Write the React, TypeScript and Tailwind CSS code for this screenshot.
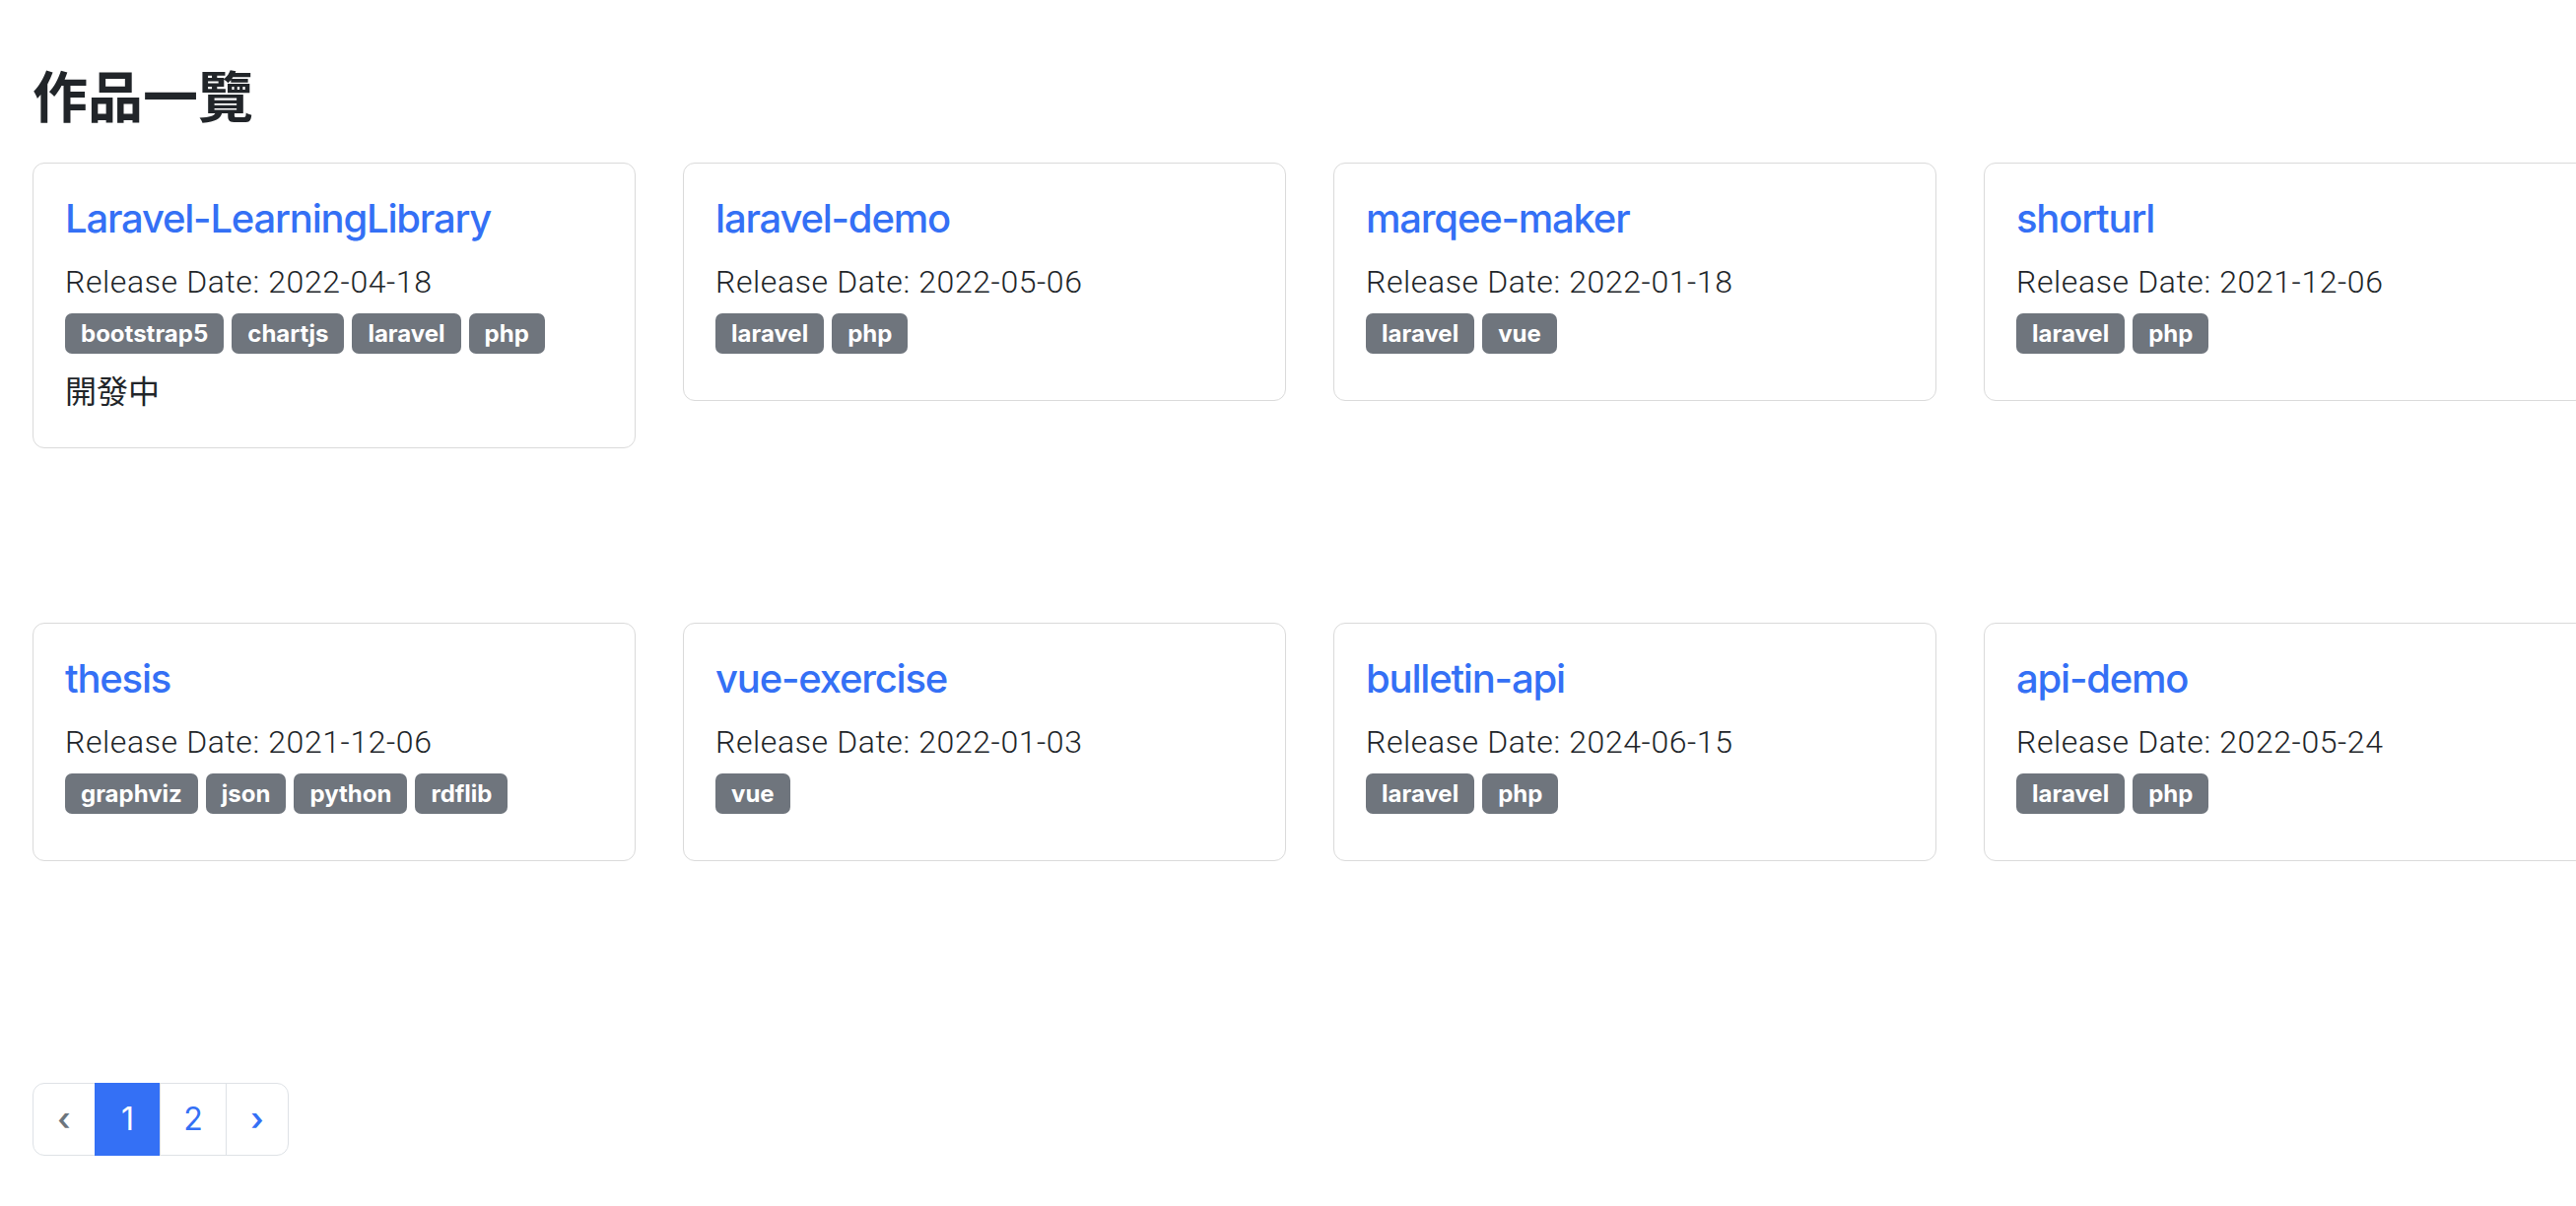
import React from "react"

type Work = {
  name: string
  date: string
  tags: string[]
  note?: string
}

const works: Work[] = [
  { name: "Laravel-LearningLibrary", date: "2022-04-18", tags: ["bootstrap5", "chartjs", "laravel", "php"], note: "開發中" },
  { name: "laravel-demo", date: "2022-05-06", tags: ["laravel", "php"] },
  { name: "marqee-maker", date: "2022-01-18", tags: ["laravel", "vue"] },
  { name: "shorturl", date: "2021-12-06", tags: ["laravel", "php"] },
  { name: "thesis", date: "2021-12-06", tags: ["graphviz", "json", "python", "rdflib"] },
  { name: "vue-exercise", date: "2022-01-03", tags: ["vue"] },
  { name: "bulletin-api", date: "2024-06-15", tags: ["laravel", "php"] },
  { name: "api-demo", date: "2022-05-24", tags: ["laravel", "php"] },
]

function WorkCard({ work }: { work: Work }) {
  return (
    <div className="self-start rounded-[12px] border border-[#dadada] bg-white">
      <div className="p-[32px]">
        <h5 className="mb-[16px] text-[40px] font-medium leading-[48px] tracking-[-1.2px] text-[#3470f5]">
          <a href="#">{work.name}</a>
        </h5>
        <p
          className="text-[32px] font-light leading-[48px] tracking-[0.6px]"
          style={{ fontFamily: 'Roboto, "Noto Sans CJK TC", sans-serif' }}
        >
          Release Date: {work.date}
        </p>
        <div className="mb-[16px] flex h-[48px] flex-wrap items-start gap-[8px] pt-[8px]">
          {work.tags.map((tag) => (
            <span
              key={tag}
              className="rounded-[7px] bg-[#6f757d] px-[16px] py-[8px] text-[24px] font-bold leading-[25px] text-white"
            >
              {tag}
            </span>
          ))}
        </div>
        {work.note && <p className="text-[32px] leading-[48px]">{work.note}</p>}
      </div>
    </div>
  )
}

export default function App() {
  return (
    <div
      className="h-[1224px] w-[2614px] overflow-hidden bg-white text-[#212529]"
      style={{ fontFamily: 'Inter, "Noto Sans CJK TC", sans-serif' }}
    >
      <div className="pl-[33px] pt-[66px]">
        <h3 className="mb-[32px] text-[56px] font-bold leading-[67px]">作品一覽</h3>

        <div className="grid grid-cols-[repeat(4,612px)] grid-rows-[467px_467px] gap-x-[48px]">
          {works.map((w) => (
            <WorkCard key={w.name} work={w} />
          ))}
        </div>

        {/* pagination */}
        <ul className="flex text-center text-[32px] leading-[48px]">
          <li className="w-[64px] rounded-l-[12px] border border-[#dee2e6] py-[12px] font-semibold text-[#6c757d]">‹</li>
          <li className="-ml-px w-[67px] border border-[#3470f5] bg-[#3470f5] py-[12px] text-white">1</li>
          <li className="-ml-px w-[68px] border border-[#dee2e6] py-[12px] text-[#3470f5]">2</li>
          <li className="-ml-px w-[64px] rounded-r-[12px] border border-[#dee2e6] py-[12px] font-semibold text-[#3470f5]">›</li>
        </ul>
      </div>
    </div>
  )
}
